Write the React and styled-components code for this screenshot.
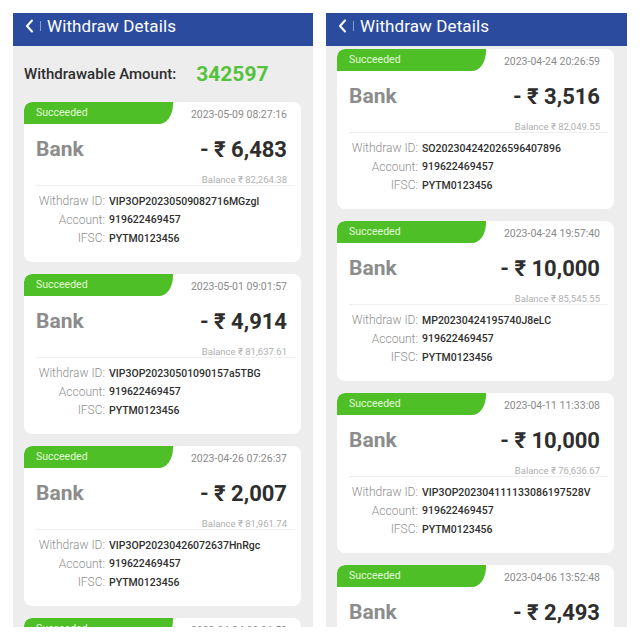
import React from "react";
import styled, { createGlobalStyle } from "styled-components";

const GlobalStyle = createGlobalStyle`
  body {
    margin: 0;
    background: #ffffff;
    font-family: Roboto, "Noto Sans", sans-serif;
  }
`;

const Page = styled.div`
  display: flex;
  gap: 13px;
  padding: 13px 0 0 13px;
  width: 640px;
  height: 640px;
  box-sizing: border-box;
`;

const Phone = styled.div`
  width: ${(p) => p.w}px;
  height: 614px;
  display: flex;
  flex-direction: column;
  overflow: hidden;
  background: #ededed;
`;

const Header = styled.div`
  height: 33px;
  box-sizing: border-box;
  flex-shrink: 0;
  display: flex;
  align-items: center;
  padding: 0 0 7px 12px;
  background: #2b4c9e;
  color: #ffffff;
`;

const Divider = styled.span`
  width: 1px;
  height: 10px;
  margin: 0 6px 0 6px;
  background: rgba(255, 255, 255, 0.45);
`;

const Title = styled.span`
  font-size: 17px;
  letter-spacing: 0.1px;
`;

const Content = styled.div`
  display: flex;
  flex-direction: column;
  gap: 12px;
  padding: ${(p) => (p.top ? "0" : "3px")} ${(p) => p.right}px 0 11px;
`;

const Available = styled.div`
  height: 56px;
  display: flex;
  align-items: center;
  gap: 20px;
  margin-bottom: -12px;
`;

const AvailableLabel = styled.span`
  font-size: 15px;
  font-weight: 500;
  color: #2d2d2d;
`;

const AvailableValue = styled.span`
  font-size: 21px;
  font-weight: 700;
  color: #55c13c;
`;

const Card = styled.div`
  flex-shrink: 0;
  height: 160px;
  background: #ffffff;
  border-radius: 8px;
  overflow: hidden;
`;

const TagRow = styled.div`
  display: flex;
  justify-content: space-between;
  height: 20px;
`;

const Tag = styled.div`
  width: 137px;
  padding: 2px 0 0 12px;
  height: 20px;
  box-sizing: content-box;
  margin-bottom: -2px;
  line-height: 18px;
  font-size: 10.5px;
  color: #e4fbd8;
  background: #4fbf28;
  border-radius: 8px 0 14px 0 / 8px 0 20px 0;
`;

const Stamp = styled.div`
  padding: 6px 14px 0 0;
  font-size: 10.5px;
  color: #8a8a8a;
`;

const MainRow = styled.div`
  display: flex;
  justify-content: space-between;
  align-items: center;
  height: 26px;
  margin-top: 14px;
  padding: 0 14px 0 12px;
`;

const Method = styled.span`
  font-size: 21px;
  font-weight: 700;
  color: #8c8c8c;
`;

const Amount = styled.span`
  font-size: 22px;
  font-weight: 700;
  color: #2e2e2e;
`;

const Balance = styled.div`
  margin-top: 13px;
  padding-right: 14px;
  text-align: right;
  line-height: 10px;
  font-size: 9.5px;
  color: #b0b0b0;
`;

const Line = styled.div`
  height: 1px;
  margin: 0 6px 0 12px;
  background: #f0f0f0;
`;

const Rows = styled.div`
  padding: 6px 0 0 12px;
`;

const Row = styled.div`
  display: flex;
  align-items: center;
  height: 18.5px;
`;

const Label = styled.span`
  width: 69px;
  text-align: right;
  font-size: 12px;
  font-weight: 300;
  color: #8f8f8f;
  white-space: nowrap;
`;

const Value = styled.span`
  margin-left: 4px;
  font-size: 10.5px;
  font-weight: 500;
  color: #2f2f2f;
`;

const leftItems = [
  { date: "2023-05-09 08:27:16", amount: "6,483", balance: "82,264.38", id: "VIP3OP20230509082716MGzgl" },
  { date: "2023-05-01 09:01:57", amount: "4,914", balance: "81,637.61", id: "VIP3OP20230501090157a5TBG" },
  { date: "2023-04-26 07:26:37", amount: "2,007", balance: "81,961.74", id: "VIP3OP20230426072637HnRgc" },
  { date: "2023-04-24 09:06:52", amount: "1,250", balance: "83,968.74", id: "VIP3OP20230424090652kLmQp" },
];

const rightItems = [
  { date: "2023-04-24 20:26:59", amount: "3,516", balance: "82,049.55", id: "SO202304242026596407896" },
  { date: "2023-04-24 19:57:40", amount: "10,000", balance: "85,545.55", id: "MP20230424195740J8eLC" },
  { date: "2023-04-11 11:33:08", amount: "10,000", balance: "76,636.67", id: "VIP3OP202304111133086197528V" },
  { date: "2023-04-06 13:52:48", amount: "2,493", balance: "86,636.67", id: "VIP3OP20230406135248aQ7xL" },
];

function Back() {
  return (
    <svg width="9" height="14" viewBox="0 0 9 14">
      <path d="M7 1.5 L2 7 L7 12.5" fill="none" stroke="#fff" strokeWidth="2" strokeLinecap="round" strokeLinejoin="round" />
    </svg>
  );
}

function WithdrawCard({ item }) {
  return (
    <Card>
      <TagRow>
        <Tag>Succeeded</Tag>
        <Stamp>{item.date}</Stamp>
      </TagRow>
      <MainRow>
        <Method>Bank</Method>
        <Amount>- ₹ {item.amount}</Amount>
      </MainRow>
      <Balance>Balance ₹ {item.balance}</Balance>
      <Line />
      <Rows>
        <Row>
          <Label>Withdraw ID:</Label>
          <Value>{item.id}</Value>
        </Row>
        <Row>
          <Label>Account:</Label>
          <Value>919622469457</Value>
        </Row>
        <Row>
          <Label>IFSC:</Label>
          <Value>PYTM0123456</Value>
        </Row>
      </Rows>
    </Card>
  );
}

function Screen({ width, right, items, showAvailable }) {
  return (
    <Phone w={width}>
      <Header>
        <Back />
        <Divider />
        <Title>Withdraw Details</Title>
      </Header>
      <Content top={showAvailable} right={right}>
        {showAvailable && (
          <Available>
            <AvailableLabel>Withdrawable Amount:</AvailableLabel>
            <AvailableValue>342597</AvailableValue>
          </Available>
        )}
        {items.map((item) => (
          <WithdrawCard key={item.date} item={item} />
        ))}
      </Content>
    </Phone>
  );
}

export default function App() {
  return (
    <>
      <GlobalStyle />
      <Page>
        <Screen width={300} right={12} items={leftItems} showAvailable />
        <Screen width={301} right={13} items={rightItems} />
      </Page>
    </>
  );
}
